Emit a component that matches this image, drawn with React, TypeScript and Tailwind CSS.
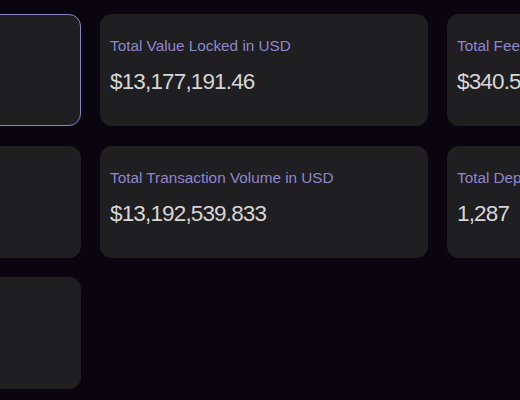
const stats = [
  { label: '', value: '', active: true },
  { label: 'Total Value Locked in USD', value: '$13,177,191.46' },
  { label: 'Total Fees Collected in USD', value: '$340.52' },
  { label: '', value: '' },
  { label: 'Total Transaction Volume in USD', value: '$13,192,539.833' },
  { label: 'Total Deposits', value: '1,287' },
  { label: '', value: '' },
];

export default function App() {
  return (
    <div className="min-h-screen w-full overflow-hidden bg-[#0a0610] pt-[14px] font-['Liberation_Sans',Arial,sans-serif]">
      <div className="ml-[-247px] grid grid-cols-[328px_328px_328px] gap-x-[19px] gap-y-[19.5px]">
        {stats.map((s, i) => (
          <div
            key={i}
            className={`h-[112px] rounded-[12px] bg-[#1f1e21] pl-[10px] pt-[22px] ${
              s.active ? 'border border-[#8c82c6]' : ''
            }`}
          >
            {s.label && (
              <div className="text-[15.3px] leading-[20px] text-[#8f87cc] whitespace-nowrap">
                {s.label}
              </div>
            )}
            {s.value && (
              <div className="mt-[11px] text-[22.5px] leading-[30px] tracking-[-0.85px] text-[#d6d6d6] whitespace-nowrap">
                {s.value}
              </div>
            )}
          </div>
        ))}
      </div>
    </div>
  );
}
